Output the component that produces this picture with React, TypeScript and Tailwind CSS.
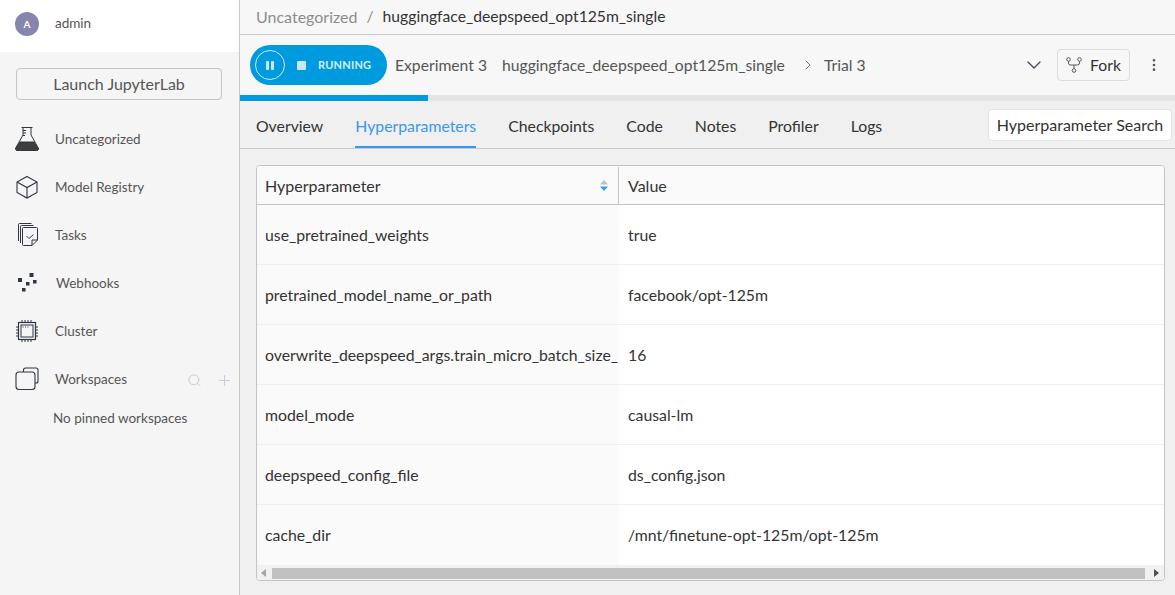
import { ChevronDown, ChevronRight, MoreVertical, Plus, Search } from 'lucide-react'

const rows = [
  ['use_pretrained_weights', 'true'],
  ['pretrained_model_name_or_path', 'facebook/opt-125m'],
  ['overwrite_deepspeed_args.train_micro_batch_size_', '16'],
  ['model_mode', 'causal-lm'],
  ['deepspeed_config_file', 'ds_config.json'],
  ['cache_dir', '/mnt/finetune-opt-125m/opt-125m'],
]

const tabs = ['Overview', 'Hyperparameters', 'Checkpoints', 'Code', 'Notes', 'Profiler', 'Logs']

function FlaskIcon() {
  return (
    <svg width="24" height="24" viewBox="0 0 24 24" fill="none" stroke="#2f3542" strokeWidth="1">
      <path d="M6.500 .5h11M8 .5V8L1 20.500C0 22.500 1 23.500 2.500 23.500h19c1.500 0 2.500-1 1.500-3L16 8V.5" />
      <path d="M8 3.500h3M8 6h3M8 8.500h2" />
      <path d="M5 15h14l4 6c.5 1.500 0 2.500-1.500 2.500h-19C1 23.500.5 22.500 1 21z" fill="#3d3d3d" />
    </svg>
  )
}

function CubeIcon() {
  return (
    <svg width="24" height="24" viewBox="0 0 24 24" fill="none" stroke="#2f3542" strokeWidth="1.100">
      <path d="M12 1.500l10 5.500v10.500l-10 5.500-10-5.500V7z" />
      <path d="M2 7l10 5.500L22 7M12 12.500V23" />
    </svg>
  )
}

function TasksIcon() {
  return (
    <svg className="ml-0.5" width="22" height="26" viewBox="0 0 22 26" fill="none" stroke="#2f3542" strokeWidth="1">
      <path d="M1.500 19V2.500a1 1 0 0 1 1-1h12" />
      <path d="M3.500 21V4.500a1 1 0 0 1 1-1h12" />
      <path d="M6.500 23.500a1 1 0 0 1-1-1V6.500a1 1 0 0 1 1-1h13a1 1 0 0 1 1 1V18l-5.500 5.500z" />
      <path d="M15 23.500V18h5.500" />
      <path d="M9.500 14l2.500 2.500 4.500-4" />
    </svg>
  )
}

function WebhookIcon() {
  return (
    <svg width="22" height="20" viewBox="0 0 22 20" fill="#2f3542">
      <rect x="3" y="5" width="4" height="4" />
      <rect x="11" y="9" width="3.500" height="3.500" />
      <rect x="14.500" y="0" width="4" height="4" />
      <rect x="18" y="7" width="3.500" height="3.500" />
      <rect x="7" y="15" width="3.500" height="3.500" />
    </svg>
  )
}

function ChipIcon() {
  return (
    <svg width="24" height="24" viewBox="0 0 24 24" fill="none" stroke="#2f3542" strokeWidth="1">
      <rect x="3.500" y="3.500" width="17" height="17" strokeWidth="1.200" />
      <rect x="6" y="6" width="12" height="12" />
      <path d="M7.500 8h1M10 8h1M12.500 8h1" />
      <path d="M7 1v2M10 1v2M13 1v2M16 1v2M7 21v2M10 21v2M13 21v2M16 21v2M1 8h2M1 11h2M1 14h2M1 17h2M21 8h2M21 11h2M21 14h2M21 17h2" />
    </svg>
  )
}

function WorkspaceIcon() {
  return (
    <svg width="24" height="24" viewBox="0 0 24 24" fill="none" stroke="#2f3542" strokeWidth="1.100">
      <path d="M8.500 5V3a2 2 0 0 1 2-2H21a2 2 0 0 1 2 2v11a2 2 0 0 1-2 2h-1" />
      <rect x="1" y="5" width="19" height="17.500" rx="3" />
    </svg>
  )
}

function ForkIcon() {
  return (
    <svg width="16" height="16" viewBox="0 0 16 16" fill="none" stroke="#555" strokeWidth="1">
      <circle cx="2.500" cy="2.500" r="1.800" />
      <circle cx="13.500" cy="2.500" r="1.800" />
      <circle cx="8" cy="13.500" r="1.800" />
      <path d="M2.500 4.500V6a2 2 0 0 0 2 2h7a2 2 0 0 0 2-2V4.500M8 8v3.500" />
    </svg>
  )
}

function NavRow({ icon, label, labelClass = '' }: { icon: React.ReactNode; label: string; labelClass?: string }) {
  return (
    <div className="flex h-12 items-center">
      <div className="flex w-[55px] justify-start pl-[15px]">{icon}</div>
      <span className={`text-[13.5px] text-[#555] ${labelClass}`}>{label}</span>
    </div>
  )
}

export default function App() {
  return (
    <div className="flex h-[595px] w-[1175px] overflow-hidden bg-[#f0f0f0] font-['Lato',sans-serif] text-[#333]">
      {/* sidebar */}
      <aside className="flex w-[240px] shrink-0 flex-col border-r border-[#c8c8c8] bg-[#f5f5f5]">
        <div className="flex h-[52px] items-center bg-white pb-1 pl-[15px]">
          <div className="flex h-6 w-6 items-center justify-center rounded-full bg-[#8586ad] text-[10px] font-bold text-white">A</div>
          <span className="mb-0.5 ml-4 text-[13.5px] text-[#555]">admin</span>
        </div>
        <div className="px-4 pt-4">
          <div className="flex h-8 w-[206px] items-center justify-center rounded border border-[#c4c4c4] text-[16px] text-[#555]">
            Launch JupyterLab
          </div>
        </div>
        <div className="mt-[15px] flex flex-col">
          <NavRow icon={<FlaskIcon />} label="Uncategorized" />
          <NavRow icon={<CubeIcon />} label="Model Registry" />
          <NavRow icon={<TasksIcon />} label="Tasks" />
          <NavRow icon={<WebhookIcon />} label="Webhooks" labelClass="ml-px" />
          <NavRow icon={<ChipIcon />} label="Cluster" />
          <div className="relative">
            <NavRow icon={<WorkspaceIcon />} label="Workspaces" />
            <Search className="absolute left-[187px] top-[18px] h-[15px] w-[15px] text-[#c8c8c8]" strokeWidth={1.5} />
            <Plus className="absolute left-[216px] top-[17px] h-[17px] w-[17px] text-[#c5cfdc]" strokeWidth={1.5} />
          </div>
          <p className="pl-[53px] pt-[5px] text-[13.5px] text-[#555]">No pinned workspaces</p>
        </div>
      </aside>

      {/* main */}
      <main className="flex min-w-0 flex-1 flex-col">
        <div className="flex h-[35px] shrink-0 items-center border-b border-[#c8c8c8] bg-[#f7f7f7] pl-4 text-[15.7px]">
          <span className="text-[16px] text-[#8c8c8c]">Uncategorized</span>
          <span className="mx-[9px] text-[#8c8c8c]">/</span>
          <span className="text-[#333]">huggingface_deepspeed_opt125m_single</span>
        </div>

        <div className="flex h-[60px] shrink-0 items-center bg-[#f7f7f7] pl-2.5 text-[15.7px] text-[#555]">
          <div className="flex h-10 w-[137px] items-center rounded-full bg-[#009bde] pl-[5px]">
            <div className="flex h-[30px] w-[30px] items-center justify-center gap-[2px] rounded-full border border-[#cfeaf7]">
              <span className="h-[9px] w-[3px] rounded-[1px] bg-[#c8e9f8]" />
              <span className="h-[9px] w-[3px] rounded-[1px] bg-[#c8e9f8]" />
            </div>
            <span className="ml-[12px] h-[9px] w-[9px] rounded-[1px] bg-[#c8e9f8]" />
            <span className="ml-[12px] text-[11px] font-bold tracking-[0.2px] text-[#d6f0fb]">RUNNING</span>
          </div>
          <span className="ml-2 mt-0.5">Experiment 3</span>
          <span className="ml-[15px] mt-0.5">huggingface_deepspeed_opt125m_single</span>
          <ChevronRight className="ml-[15px] h-4 w-4 text-[#555]" strokeWidth={1.25} />
          <span className="ml-2 mt-0.5">Trial 3</span>
          <ChevronDown className="ml-auto h-6 w-6 text-[#445]" strokeWidth={1.25} />
          <div className="ml-[11px] flex h-8 w-[73px] items-center justify-center gap-2 rounded border border-[#dcdcdc] text-[#333]">
            <ForkIcon />
            <span className="mt-px">Fork</span>
          </div>
          <div className="ml-2 flex h-8 w-8 items-center justify-center">
            <MoreVertical className="h-4 w-4 text-[#555]" strokeWidth={2} />
          </div>
          <div className="w-[5px]" />
        </div>

        <div className="h-1.5 shrink-0 bg-[#e4e4e4]">
          <div className="h-full w-[188px] bg-[#009bde]" />
        </div>

        <div className="flex h-[48px] shrink-0 items-stretch border-b border-[#c8c8c8] pl-[16px] pr-[3px]">
          {tabs.map((tab) => (
            <div
              key={tab}
              className={`mr-8 flex items-center border-b-2 pt-[5px] text-[15.8px] ${tab === 'Hyperparameters' ? 'border-[#3a96f3] text-[#3a96f3]' : 'border-transparent text-[#333]'}`}
            >
              {tab}
            </div>
          ))}
          <div className="ml-auto mt-2 flex h-8 w-[184px] items-center justify-center rounded border border-[#e4e4e4] bg-white text-[16px] text-[#333]">
            Hyperparameter Search
          </div>
        </div>

        <div className="flex min-h-0 flex-1 flex-col pl-4 pr-[10px] pt-4 pb-[14px]">
          <div className="flex flex-1 flex-col overflow-hidden rounded border border-[#c4c4c4] bg-white">
            <div className="flex h-[39px] shrink-0 border-b border-[#c4c4c4] bg-[#fafafa] pt-px text-[16px] text-[#333]">
              <div className="flex w-[362px] items-center justify-between border-r border-[#c4c4c4] pl-2 pr-2.5">
                <span>Hyperparameter</span>
                <svg width="8" height="11" viewBox="0 0 8 11">
                  <path d="M4 0l4 4.500H0z" fill="#bfbfbf" />
                  <path d="M4 11L0 6.500h8z" fill="#3a96f3" />
                </svg>
              </div>
              <div className="flex flex-1 items-center pl-[9px]">Value</div>
            </div>
            <div className="flex-1">
              {rows.map(([name, value], i) => (
                <div key={name} className={`flex h-[60px] text-[15.8px] text-[#333] ${i < rows.length - 1 ? 'border-b border-[#f0f0f0]' : ''}`}>
                  <div className="flex w-[362px] items-center overflow-hidden whitespace-nowrap bg-[#fafafa] pl-2">{name}</div>
                  <div className="flex flex-1 items-center pl-[9px]">{value}</div>
                </div>
              ))}
            </div>
            <div className="flex h-[16px] shrink-0 items-center bg-[#f1f1f1] px-[4px]">
              <svg width="5" height="8" viewBox="0 0 5 8"><path d="M5 0v8L0 4z" fill="#a3a3a3" /></svg>
              <div className="ml-[6px] h-[11px] flex-1 bg-[#c1c1c1]" />
              <svg className="ml-[9px] mr-[1px]" width="5" height="8" viewBox="0 0 5 8"><path d="M0 0v8l5-4z" fill="#505050" /></svg>
            </div>
          </div>
        </div>
      </main>
    </div>
  )
}
